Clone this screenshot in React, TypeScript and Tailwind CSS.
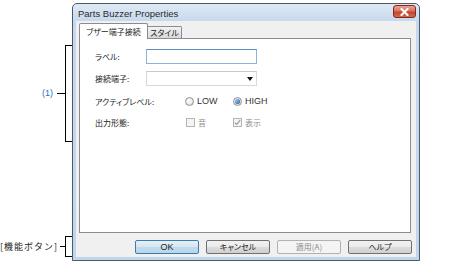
import React from "react";

const JP = "font-['Noto_Sans_CJK_JP',sans-serif] [font-feature-settings:'palt']";
const LAT = "font-['Liberation_Sans','Noto_Sans_CJK_JP',sans-serif]";

function Radio({ checked }: { checked?: boolean }) {
  return (
    <span className="w-[9px] h-[9px] rounded-full border border-[#8f9092] bg-[radial-gradient(circle_at_40%_40%,#ffffff,#d4d6d9)] flex items-center justify-center shrink-0">
      {checked && (
        <span className="w-[5px] h-[5px] rounded-full bg-[radial-gradient(circle_at_35%_35%,#8cc3f3,#1b4f9a)]" />
      )}
    </span>
  );
}

function Check({ checked }: { checked?: boolean }) {
  return (
    <span className="w-[9px] h-[9px] border border-[#b4b4b4] bg-[#f4f4f4] flex items-center justify-center shrink-0">
      {checked && (
        <svg width="7" height="7" viewBox="0 0 7 7">
          <path d="M0.8 3.6 L2.7 5.4 L6.2 1.2" fill="none" stroke="#9a9a9a" strokeWidth="1.1" />
        </svg>
      )}
    </span>
  );
}

function Btn({ children, kind }: { children: React.ReactNode; kind: "default" | "normal" | "disabled" }) {
  const cls =
    kind === "default"
      ? "border-[#3d7bad] bg-[linear-gradient(to_bottom,#e5f1f9,#d3e6f3_50%,#c2dbec_51%,#b9d6ea)] text-[#222]"
      : kind === "normal"
      ? "border-[#707070] bg-[linear-gradient(to_bottom,#f2f2f2,#ebebeb_50%,#dddddd_51%,#cfcfcf)] text-[#222]"
      : "border-[#adb2b5] bg-[#f4f4f4] text-[#8b8b8b]";
  return (
    <div className={`w-[64px] h-[14px] rounded-[2px] border flex items-center justify-center leading-none ${cls}`}>
      {children}
    </div>
  );
}

export default function App() {
  return (
    <div className="w-[474px] h-[264px] bg-white flex overflow-hidden">
      {/* annotations */}
      <div className="w-[72px] shrink-0 flex flex-col">
        <div className="mt-[45px] h-[97px] flex items-center justify-end">
          <span className={`${LAT} text-[9px] leading-none text-[#2b6fc2]`}>(1)</span>
          <div className="ml-[4px] w-[8px] h-px bg-black" />
          <div className="w-[7px] h-full border-l border-y border-black" />
        </div>
        <div className="mt-[94px] h-[21px] flex items-center justify-end">
          <span className="font-['Noto_Sans_CJK_JP',sans-serif] text-[9px] tracking-[1px] leading-none text-[#222] whitespace-nowrap">[機能ボタン]</span>
          <div className="ml-[2px] w-[5px] h-px bg-black" />
          <div className="w-[7px] h-full border-l border-y border-black" />
        </div>
      </div>

      {/* dialog */}
      <div className="w-[348px] h-[258px] mt-[3px] shrink-0 border border-[#4c5b6c] rounded-t-[5px] bg-[linear-gradient(to_bottom,#dfe9f5,#c5d8ec_18px,#c2d6eb)] flex flex-col px-[3px] pb-[3px]">
        <div className="h-[17px] flex items-start justify-between">
          <span className={`${LAT} text-[9.5px] leading-none text-[#2a2a2a] ml-[2px] mt-[5px]`}>Parts Buzzer Properties</span>
          <div className="mt-[1px] w-[23px] h-[13px] rounded-[3px] border border-[#7e2b1e] bg-[linear-gradient(to_bottom,#eba493,#d8735c_45%,#c4462c_55%,#cf6a4f)] flex items-center justify-center">
            <svg width="9" height="8" viewBox="0 0 9 8">
              <path d="M1.5 1 L7.5 7 M7.5 1 L1.5 7" stroke="#ffffff" strokeWidth="2" strokeLinecap="square" />
            </svg>
          </div>
        </div>

        <div className="flex-1 bg-[#f0f0f0] flex flex-col pt-[2px] pl-[3px] pr-[5px]">
          {/* tabs */}
          <div className="h-[15px] flex items-end relative z-10">
            <div className={`${JP} w-[69px] h-[16px] -mb-px bg-white border border-b-0 border-[#898c95] rounded-t-[2px] flex items-center justify-center text-[8px] leading-none text-[#222]`}>
              ブザー端子接続
            </div>
            <div className={`${JP} w-[34px] h-[12px] bg-[linear-gradient(to_bottom,#f3f3f3,#e6e6e6_50%,#d9d9d9)] border border-l-0 border-b-0 border-[#898c95] rounded-tr-[2px] flex items-center justify-center text-[8px] leading-none text-[#222]`}>
              スタイル
            </div>
          </div>
          {/* panel */}
          <div className="w-[332px] h-[195px] bg-white border border-[#898c95] flex flex-col pl-[15px] pt-[10px]">
            <div className="h-[15px] flex items-center">
              <span className={`${JP} w-[51px] text-[8px] leading-none text-[#222]`}>ラベル:</span>
              <div className="w-[111px] h-[15px] border border-[#8fb2d8] border-t-[#5d8cc0] bg-white" />
            </div>
            <div className="mt-[7px] h-[15px] flex items-center">
              <span className={`${JP} w-[51px] text-[8px] leading-none text-[#222]`}>接続端子:</span>
              <div className="w-[111px] h-[15px] border border-[#d9d9d9] border-t-[#c8c8c8] bg-white flex items-center justify-end pr-[3px]">
                <svg width="6" height="4" viewBox="0 0 6 4">
                  <path d="M0 0 H6 L3 4 Z" fill="#111" />
                </svg>
              </div>
            </div>
            <div className="mt-[8px] h-[15px] flex items-center">
              <span className={`${JP} w-[90px] text-[8px] leading-none text-[#222]`}>アクティブレベル:</span>
              <div className="w-[48px] flex items-center gap-[3px]">
                <Radio />
                <span className={`${LAT} text-[9px] leading-none text-[#333]`}>LOW</span>
              </div>
              <div className="flex items-center gap-[3px]">
                <Radio checked />
                <span className={`${LAT} text-[9px] leading-none text-[#333]`}>HIGH</span>
              </div>
            </div>
            <div className="mt-[6px] h-[15px] flex items-center">
              <span className={`${JP} w-[91px] text-[8px] leading-none text-[#222]`}>出力形態:</span>
              <div className="w-[47px] flex items-center gap-[3px]">
                <Check />
                <span className={`${JP} text-[8px] leading-none text-[#8d8d8d]`}>音</span>
              </div>
              <div className="flex items-center gap-[3px]">
                <Check checked />
                <span className={`${JP} text-[8px] leading-none text-[#8d8d8d]`}>表示</span>
              </div>
            </div>
          </div>
          {/* buttons */}
          <div className="mt-[7px] -mr-px flex justify-end gap-[7px]">
            <Btn kind="default"><span className={`${LAT} text-[9px]`}>OK</span></Btn>
            <Btn kind="normal"><span className={`${JP} text-[8px]`}>キャンセル</span></Btn>
            <Btn kind="disabled"><span className={`${JP} text-[8px]`}>適用(A)</span></Btn>
            <Btn kind="normal"><span className={`${JP} text-[8px]`}>ヘルプ</span></Btn>
          </div>
        </div>
      </div>
    </div>
  );
}
